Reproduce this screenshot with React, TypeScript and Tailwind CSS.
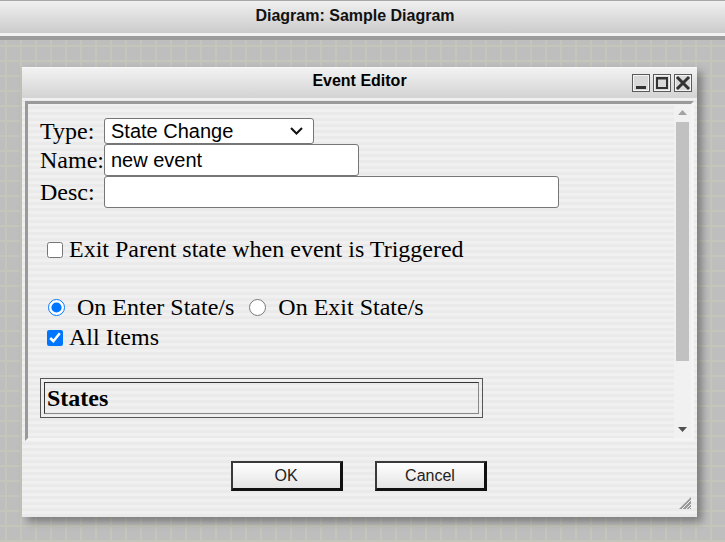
import React from "react";

const serif = "font-['Liberation_Serif',serif] text-[24px] leading-[23px] text-black";
const sans = "font-['Liberation_Sans',Arial,sans-serif]";

const TitleButton: React.FC<{ kind: "min" | "max" | "close" }> = ({ kind }) => (
  <svg width="18" height="18" viewBox="0 0 18 18">
    <rect x="0.5" y="0.5" width="17" height="17" fill="#d9d9d9" stroke="#5a5a5a" />
    <rect x="1.5" y="1.5" width="15" height="15" fill="none" stroke="#f4f4f4" />
    {kind === "min" && <rect x="4" y="12" width="10" height="3" fill="#333" />}
    {kind === "max" && (
      <>
        <rect x="4" y="4" width="10" height="10" fill="none" stroke="#333" strokeWidth="2" />
        <rect x="4" y="3.5" width="10" height="2" fill="#333" />
      </>
    )}
    {kind === "close" && (
      <path d="M4 4 L14 14 M14 4 L4 14" stroke="#333" strokeWidth="3" strokeLinecap="square" />
    )}
  </svg>
);

const DialogButton: React.FC<{ label: string }> = ({ label }) => (
  <button
    className={`${sans} w-[112px] h-[30px] text-[16px] text-[#222] border-2 border-t-[#3a3a3a] border-l-[#3a3a3a] border-r-[#111] border-b-[#111] border-r-[3px] border-b-[3px] bg-[linear-gradient(to_bottom,#ffffff,#f3f3f3_45%,#e4e4e4)]`}
  >
    {label}
  </button>
);

const FieldRow: React.FC<{ label: string; height: string; children: React.ReactNode }> = ({ label, height, children }) => (
  <div className={`flex items-center ${height}`}>
    <span className={`${serif} w-[64px] shrink-0`}>{label}</span>
    {children}
  </div>
);

const Scrollbar: React.FC = () => (
  <div className="w-[17px] flex flex-col bg-[#f1f1f1] shrink-0">
    <div className="h-[17px] flex items-center justify-center">
      <svg width="9" height="5" viewBox="0 0 9 5">
        <path d="M0 5 L4.5 0 L9 5 Z" fill="#a3a3a3" />
      </svg>
    </div>
    <div className="mt-[1px] mx-[2px] h-[239px] bg-[#c1c1c1]" />
    <div className="flex-1" />
    <div className="h-[17px] flex items-center justify-center">
      <svg width="9" height="5" viewBox="0 0 9 5">
        <path d="M0 0 L9 0 L4.5 5 Z" fill="#505050" />
      </svg>
    </div>
  </div>
);

const EventEditor: React.FC = () => (
  <div className="relative w-[675px] h-[450px] flex flex-col bg-[#eeeeee] bg-[repeating-linear-gradient(to_bottom,#f0f0f0_0px,#f0f0f0_3px,#eaeaea_3px,#eaeaea_6px)] shadow-[5px_5px_8px_rgba(0,0,0,0.35)]">
    {/* title bar */}
    <div className="h-[31px] flex items-center justify-center relative border-t border-[#f8f8f8] bg-[linear-gradient(to_bottom,#f2f2f2,#d3d3d3)]">
      <span className={`${sans} font-bold text-[16px] text-black -mt-[4px]`}>Event Editor</span>
      <div className="absolute right-[5px] top-[6px] flex gap-[3px]">
        <TitleButton kind="min" />
        <TitleButton kind="max" />
        <TitleButton kind="close" />
      </div>
    </div>

    <div className="px-[3px] pt-[3px]">
      <div className="h-[340px] flex border-[3px] border-t-[#9a9a9a] border-l-[#9a9a9a] border-r-[#f4f4f4] border-b-[#f4f4f4]">
        <div className="flex-1 pl-[12px] pt-[14px] flex flex-col">
          <FieldRow label="Type:" height="h-[26px]">
            <div
              className={`${sans} w-[210px] h-[26px] flex items-center justify-between pl-[6px] pr-[10px] text-[20px] text-black bg-white border border-[#767676] rounded-[3px]`}
            >
              <span>State Change</span>
              <svg width="13" height="8" viewBox="0 0 13 8">
                <path d="M1 1 L6.5 6.5 L12 1" fill="none" stroke="#111" strokeWidth="2" />
              </svg>
            </div>
          </FieldRow>
          <FieldRow label="Name:" height="h-[32px]">
            <div
              className={`${sans} w-[255px] h-[32px] flex items-center pl-[6px] text-[20px] text-black bg-white border border-[#767676] rounded-[3px]`}
            >
              new event
            </div>
          </FieldRow>
          <FieldRow label="Desc:" height="h-[32px]">
            <div className="w-[455px] h-[32px] bg-white border border-[#767676] rounded-[3px]" />
          </FieldRow>

          <label className="mt-[30px] h-[23px] flex items-center pl-[7px] gap-[6px]">
            <input type="checkbox" className="w-[16px] h-[16px] m-0" readOnly />
            <span className={serif}>Exit Parent state when event is Triggered</span>
          </label>

          <div className="mt-[35px] h-[23px] flex items-center pl-[8px]">
            <input type="radio" name="when" defaultChecked className="w-[17px] h-[17px] m-0" />
            <span className={`${serif} ml-[12px]`}>On Enter State/s</span>
            <input type="radio" name="when" className="w-[17px] h-[17px] m-0 ml-[15px]" />
            <span className={`${serif} ml-[12px]`}>On Exit State/s</span>
          </div>

          <label className="mt-[7px] h-[23px] flex items-center pl-[7px] gap-[6px]">
            <input type="checkbox" defaultChecked className="w-[16px] h-[16px] m-0" />
            <span className={serif}>All Items</span>
          </label>

          <div className="mt-[29px] w-[443px] h-[40px] p-[3px] border border-[#555]">
            <div className="h-full flex items-center pl-[2px] border border-t-[#333] border-l-[#333] border-r-[#888] border-b-[#888]">
              <span className={`${serif} font-bold`}>States</span>
            </div>
          </div>
        </div>
        <Scrollbar />
      </div>
    </div>

    <div className="flex justify-center gap-[32px] pt-[20px] pr-[2px]">
      <DialogButton label="OK" />
      <DialogButton label="Cancel" />
    </div>

    {/* resize grip */}
    <svg className="absolute right-[6px] bottom-[8px]" width="12" height="12" viewBox="0 0 12 12">
      <path d="M12 0 L12 12 L0 12 Z" fill="#9a9a9a" />
      <path d="M3 12 L12 3 M7 12 L12 7 M10 12 L12 10" stroke="#eeeeee" strokeWidth="1" />
    </svg>
  </div>
);

const App: React.FC = () => {
  return (
    <div className="w-[725px] h-[542px] overflow-hidden flex flex-col">
      <div className="h-[33px] flex items-center justify-center pr-[15px] border-t border-[#a8a8a8] bg-[linear-gradient(to_bottom,#f0f0f0,#cbcbcb)]">
        <span className={`${sans} font-bold text-[16px] text-[#111] -mt-[2px]`}>Diagram: Sample Diagram</span>
      </div>
      <div className="h-[3px] bg-[#f2f2f2]" />
      <div className="h-[4px] bg-[#9c9c9c]" />
      <div className="flex-1 pl-[22px] pt-[27px] bg-[#bebebe] bg-[linear-gradient(to_right,#c4c6bb_2px,transparent_2px),linear-gradient(to_bottom,#c4c6bb_2px,transparent_2px)] bg-[size:15px_15px] bg-[position:5px_5px]">
        <EventEditor />
      </div>
    </div>
  );
};

export default App;
